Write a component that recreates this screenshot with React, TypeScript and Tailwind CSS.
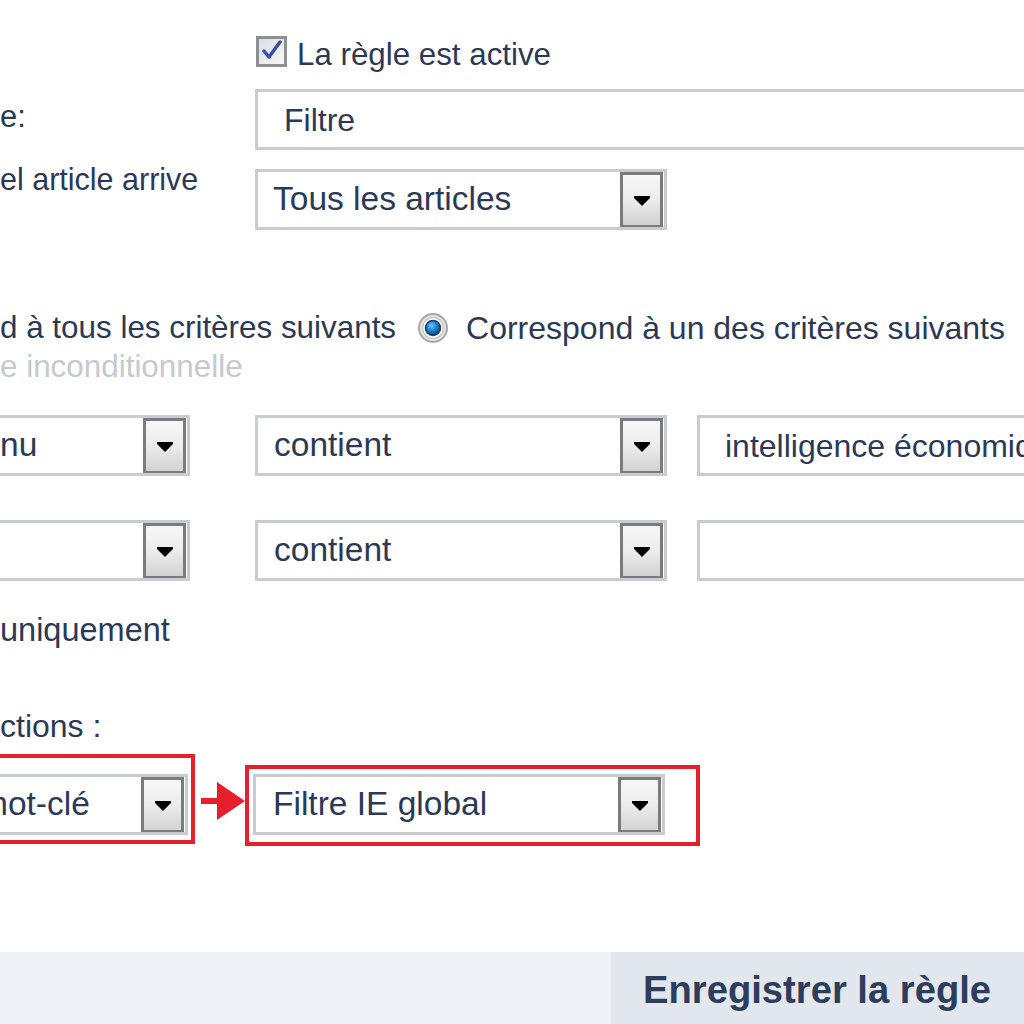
import React from "react";

const TEXT = "text-[#2b3957]";

function Arrow() {
  return (
    <svg width="16" height="10" viewBox="0 0 16 10">
      <path d="M0 0 H16 V2 L8 10 L0 2 Z" fill="#000" />
    </svg>
  );
}

function DropBtn() {
  return (
    <div className="flex h-[56px] w-[43px] shrink-0 items-center justify-center border-[3px] border-[#7b7b7b] bg-linear-to-b from-[#f7f7f7] via-[#ececec] to-[#d2d2d2] pt-[2px]">
      <Arrow />
    </div>
  );
}

function Select({
  w,
  text,
  pl = "pl-[16px]",
  hideLeft = false,
}: {
  w: string;
  text?: React.ReactNode;
  pl?: string;
  hideLeft?: boolean;
}) {
  return (
    <div
      className={`flex h-[61px] ${w} shrink-0 items-center justify-between overflow-hidden border-[3px] border-[#c7cbd3] bg-white pr-[1px] ${
        hideLeft ? "border-l-0" : ""
      }`}
    >
      <div className={`${pl} whitespace-nowrap text-[33.5px] leading-normal ${TEXT}`}>{text}</div>
      <DropBtn />
    </div>
  );
}

function Input({ w, text, pl }: { w: string; text?: string; pl: string }) {
  return (
    <div
      className={`flex h-[61px] ${w} shrink-0 items-center border-[3px] border-[#c7cbd3] bg-white ${pl} whitespace-nowrap text-[32px] leading-normal ${TEXT}`}
    >
      {text}
    </div>
  );
}

export default function App() {
  return (
    <div className="relative h-[1024px] w-[1024px] overflow-hidden bg-white font-['Liberation_Sans',Arial,sans-serif]">
      <div className="flex h-[952px] flex-col">
        {/* checkbox row */}
        <div className="mt-[35px] flex h-[32px] items-center">
          <div className="w-[256px] shrink-0" />
          <div className="flex h-[31px] w-[31px] shrink-0 items-center justify-center border-[3px] border-[#8f8f8f] bg-linear-to-br from-[#d9dee7] to-[#f7f7f7]">
            <svg width="22" height="22" viewBox="0 0 22 22">
              <path d="M3 11 L8 17 L19 2" stroke="#3d4f9f" strokeWidth="3.5" fill="none" strokeLinecap="round" strokeLinejoin="round" />
            </svg>
          </div>
          <span className={`ml-[10px] mt-[8px] whitespace-nowrap text-[31.3px] leading-normal ${TEXT}`}>La règle est active</span>
        </div>

        {/* name row */}
        <div className="mt-[22px] flex">
          <div className={`flex h-[60px] w-[255px] shrink-0 items-center text-[31px] leading-normal ${TEXT}`}>
            <span className="-mt-[3px]">e:</span>
          </div>
          <Input w="w-[800px]" text="Filtre" pl="pl-[26px]" />
        </div>

        {/* when row */}
        <div className="mt-[19px] flex">
          <div className={`w-[255px] shrink-0 whitespace-nowrap text-[30.5px] leading-normal ${TEXT}`}>
            <div className="-mt-[12px]">el article arrive</div>
          </div>
          <Select w="w-[412px]" text="Tous les articles" pl="pl-[15px]" />
        </div>

        {/* radio row */}
        <div className={`mt-[80px] flex h-[36px] items-center whitespace-nowrap text-[31.4px] leading-normal ${TEXT}`}>
          <span>d à tous les critères suivants</span>
          <svg className="ml-[21px] shrink-0" width="32" height="32" viewBox="0 0 32 32">
            <defs>
              <radialGradient id="rb" cx="0.4" cy="0.35" r="0.7">
                <stop offset="0" stopColor="#6fc4ff" />
                <stop offset="0.5" stopColor="#1b7fd0" />
                <stop offset="1" stopColor="#0d3a6e" />
              </radialGradient>
            </defs>
            <circle cx="16" cy="16" r="14" fill="#e6e6e6" stroke="#a7a7a7" strokeWidth="2" />
            <circle cx="16" cy="16" r="10.5" fill="#ffffff" stroke="#c9c9c9" strokeWidth="1.5" />
            <circle cx="16" cy="16" r="7.5" fill="url(#rb)" stroke="#1f3c64" strokeWidth="1.5" />
          </svg>
          <span className="ml-[17px] text-[32px]">Correspond à un des critères suivants</span>
        </div>

        {/* unconditional */}
        <div className="mt-[3px] flex h-[36px] items-center whitespace-nowrap text-[31.4px] leading-normal text-[#c4c9d1]">
          e inconditionnelle
        </div>

        {/* condition row 1 */}
        <div className="mt-[30px] flex">
          <Select w="w-[190px]" text="nu" pl="pl-[0px]" hideLeft />
          <div className="w-[65px] shrink-0" />
          <Select w="w-[412px]" text="contient" />
          <div className="w-[30px] shrink-0" />
          <Input w="w-[400px]" text="intelligence économique" pl="pl-[25px]" />
        </div>

        {/* condition row 2 */}
        <div className="mt-[44px] flex">
          <Select w="w-[190px]" text="" pl="pl-[0px]" hideLeft />
          <div className="w-[65px] shrink-0" />
          <Select w="w-[412px]" text="contient" />
          <div className="w-[30px] shrink-0" />
          <Input w="w-[400px]" text="" pl="pl-[25px]" />
        </div>

        {/* uniquement */}
        <div className={`mt-[31px] flex h-[36px] items-center whitespace-nowrap text-[32.5px] leading-normal ${TEXT}`}>
          uniquement
        </div>

        {/* actions label */}
        <div className={`mt-[60px] flex h-[36px] items-center whitespace-nowrap text-[32px] leading-normal ${TEXT}`}>
          ctions :
        </div>

        {/* action row */}
        <div className="mt-[10px] flex items-start">
          <div className="-ml-[4px] h-[90px] w-[199px] shrink-0 border-[4px] border-[#e5202b] pt-[16px] pr-[3px]">
            <div className="-ml-[4px] flex justify-end">
              <Select w="w-[195px]" text={<span className="-ml-[13px] inline-block">mot-clé</span>} pl="pl-[0px]" hideLeft />
            </div>
          </div>
          <svg className="shrink-0" width="50" height="92" viewBox="0 0 50 92">
            <rect x="6" y="44" width="18" height="6" fill="#e5202b" />
            <polygon points="22,28 50,47 22,66" fill="#e5202b" />
          </svg>
          <div className="mt-[11px] h-[81px] w-[455px] shrink-0 border-[4px] border-[#e5202b] pl-[4px] pt-[5px]">
            <Select w="w-[412px]" text="Filtre IE global" pl="pl-[17px]" />
          </div>
        </div>
      </div>

      {/* footer */}
      <div className="flex h-[72px] bg-[#eef2f7]">
        <div className="flex-1" />
        <div className="flex w-[413px] items-center whitespace-nowrap bg-[#e2e7ee] pl-[32px] text-[38.2px] font-bold leading-normal text-[#2d3d5b]">
          <span className="mt-[3px]">Enregistrer la règle</span>
        </div>
      </div>
    </div>
  );
}
